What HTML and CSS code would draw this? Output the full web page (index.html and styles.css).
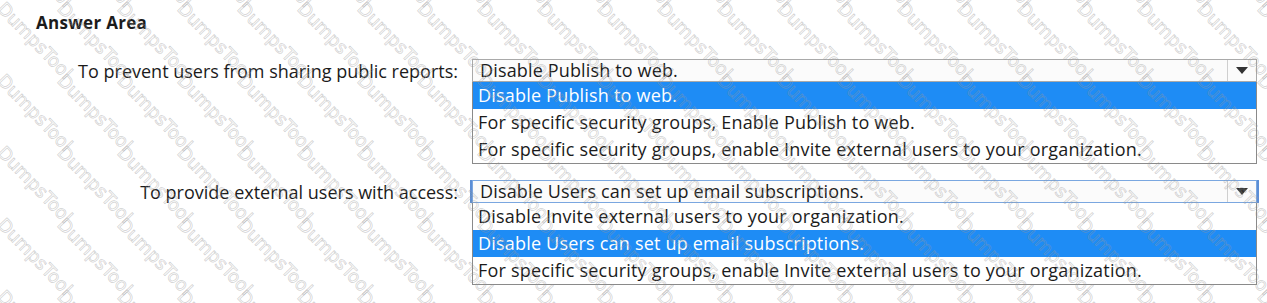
FILE: index.html
```html
<!DOCTYPE html>
<html lang="en">
<head>
    <meta charset="UTF-8">
    <title>Answer Area</title>
    <link rel="stylesheet" href="styles.css">
</head>
<body>
    <div class="page">
        <div class="title">Answer Area</div>

        <div class="question">
            <div class="label">To prevent users from sharing public reports:</div>
            <div class="dropdown">
                <div class="select">
                    <span class="value">Disable Publish to web.</span>
                    <span class="arrow"></span>
                </div>
                <ul class="options">
                    <li class="selected">Disable Publish to web.</li>
                    <li>For specific security groups, Enable Publish to web.</li>
                    <li>For specific security groups, enable Invite external users to your organization.</li>
                </ul>
            </div>
        </div>

        <div class="question">
            <div class="label">To provide external users with access:</div>
            <div class="dropdown focused">
                <div class="select">
                    <span class="value">Disable Users can set up email subscriptions.</span>
                    <span class="arrow"></span>
                </div>
                <ul class="options">
                    <li>Disable Invite external users to your organization.</li>
                    <li class="selected">Disable Users can set up email subscriptions.</li>
                    <li>For specific security groups, enable Invite external users to your organization.</li>
                </ul>
            </div>
        </div>

        <div class="watermark" id="watermark"></div>
    </div>
    <script src="script.js"></script>
</body>
</html>
```
FILE: styles.css
```css
:root {
    --text-color: #1b1b1b;
    --highlight: #1e8cf5;
    --border: #8a8a8a;
}

* {
    margin: 0;
    padding: 0;
    box-sizing: border-box;
}

body {
    font-family: 'Open Sans', 'Noto Sans', sans-serif;
    color: var(--text-color);
    background-color: white;
    overflow: hidden;
}

.page {
    position: relative;
    width: 1267px;
    height: 303px;
    padding: 10px 10px 0 0;
    overflow: hidden;
}

.title {
    font-size: 17px;
    font-weight: 700;
    padding-left: 36px;
    height: 25px;
    line-height: 25px;
    letter-spacing: 0.3px;
}

.question {
    display: flex;
    gap: 14px;
    margin-top: 24px;
}

.question + .question {
    margin-top: 16px;
}

.label {
    width: 458px;
    text-align: right;
    font-size: 18px;
    height: 24px;
    line-height: 24px;
}

.dropdown {
    flex: 1;
    font-size: 18px;
}

.select {
    display: flex;
    height: 23px;
    border: 1px solid #a9a9a9;
    background-color: #fbfbfb;
}

.dropdown.focused .select {
    border: 1px solid #7aa7e0;
    box-shadow: -2px 0 0 #5b8ed6, 2px 0 0 #5b8ed6;
}

.value {
    flex: 1;
    padding-left: 7px;
    line-height: 21px;
    letter-spacing: 0.15px;
}

.arrow {
    width: 29px;
    border-left: 1px solid #cfcfcf;
    display: flex;
    align-items: center;
    justify-content: center;
}

.arrow::before {
    content: '';
    border-left: 6px solid transparent;
    border-right: 6px solid transparent;
    border-top: 7px solid #333;
}

.options {
    list-style: none;
    border: 1px solid var(--border);
    border-top: none;
    background-color: white;
}

.options li {
    height: 27px;
    line-height: 27px;
    padding-left: 5px;
    white-space: nowrap;
    letter-spacing: 0.2px;
}

.options li.selected {
    background-color: var(--highlight);
    color: white;
}

.watermark {
    position: absolute;
    top: -73px;
    left: 7px;
    display: grid;
    grid-template-columns: repeat(22, 60px);
    grid-auto-rows: 72px;
    pointer-events: none;
}

.watermark span {
    display: block;
    width: 120px;
    font-family: 'DejaVu Sans', sans-serif;
    font-size: 18px;
    line-height: 18px;
    color: transparent;
    -webkit-text-stroke: 0.7px rgba(150, 150, 150, 0.45);
    transform: rotate(46deg);
    transform-origin: left top;
    white-space: nowrap;
}
```
FILE: script.js
```js
// Filigrane répété sur toute la zone
const watermark = document.getElementById('watermark');
for (let i = 0; i < 22 * 6; i++) {
    const span = document.createElement('span');
    span.textContent = 'DumpsTool';
    watermark.appendChild(span);
}
```
